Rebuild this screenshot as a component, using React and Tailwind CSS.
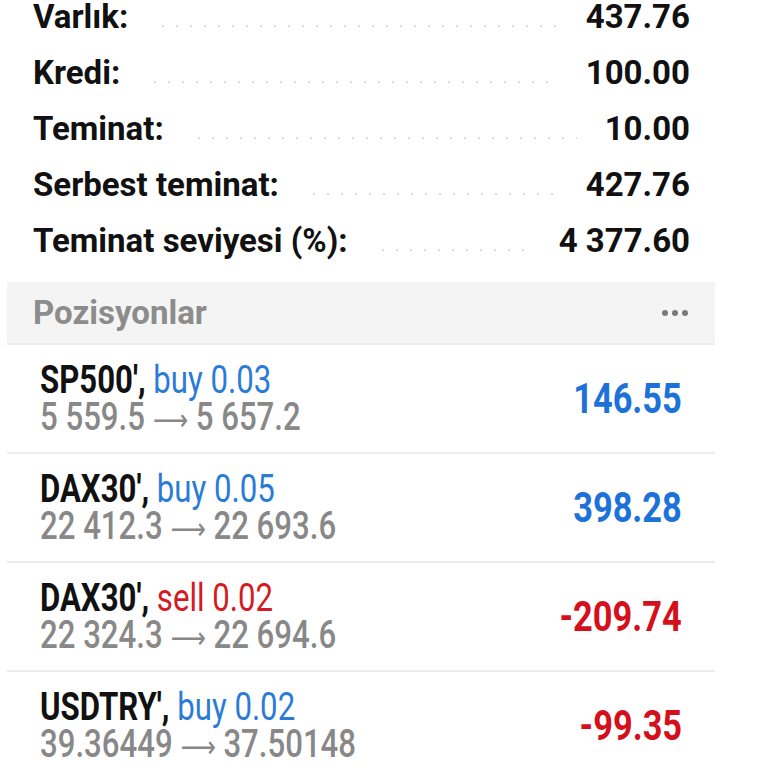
const summary = [
  { label: 'Varlık:', value: '437.76' },
  { label: 'Kredi:', value: '100.00' },
  { label: 'Teminat:', value: '10.00' },
  { label: 'Serbest teminat:', value: '427.76' },
  { label: 'Teminat seviyesi (%):', value: '4 377.60' },
]

const positions = [
  { symbol: "SP500'", side: 'buy', volume: '0.03', open: '5 559.5', current: '5 657.2', profit: '146.55' },
  { symbol: "DAX30'", side: 'buy', volume: '0.05', open: '22 412.3', current: '22 693.6', profit: '398.28' },
  { symbol: "DAX30'", side: 'sell', volume: '0.02', open: '22 324.3', current: '22 694.6', profit: '-209.74' },
  { symbol: "USDTRY'", side: 'buy', volume: '0.02', open: '39.36449', current: '37.50148', profit: '-99.35' },
]

function SummaryRow({ label, value }) {
  return (
    <div className="flex items-center h-[56px] pl-[26px] pr-[25px]">
      <span className="font-bold text-[33px] text-[#111] whitespace-nowrap">{label}</span>
      <div className="flex-1 mx-[28px] mt-[18px] h-[4px] bg-[radial-gradient(circle,#d9d9d9_1px,transparent_1.6px)] bg-[length:14px_4px] bg-repeat-x" />
      <span className="font-bold text-[33px] text-[#111] whitespace-nowrap">{value}</span>
    </div>
  )
}

function PositionRow({ p }) {
  const sell = p.side === 'sell'
  const loss = p.profit.startsWith('-')
  return (
    <div className="flex items-center justify-between h-[109px] border-b-2 border-[#ececec] pl-[33px] pr-[33px]">
      <div className="flex flex-col origin-left scale-x-[0.82] leading-[37px] mt-[2px]">
        <div className="text-[38px] whitespace-nowrap">
          <span className="font-bold text-[#111]">{p.symbol}, </span>
          <span className={sell ? 'text-[#d41a22]' : 'text-[#2a7bd8]'}>
            {p.side} {p.volume}
          </span>
        </div>
        <div className="text-[38px] font-medium text-[#888] whitespace-nowrap">
          {p.open} <span className="font-['DejaVu_Sans',sans-serif] font-normal text-[30px]">⟶</span> {p.current}
        </div>
      </div>
      <div
        className={
          'origin-right scale-x-[0.8] font-bold text-[43px] ' +
          (loss ? 'text-[#d3101c]' : 'text-[#1d72d9]')
        }
      >
        {p.profit}
      </div>
    </div>
  )
}

export default function App() {
  return (
    <div className="w-[768px] h-[768px] overflow-hidden bg-white font-['Roboto',sans-serif]">
      <div className="ml-[7px] w-[708px]">
        <div className="-mt-[11px] mb-[13px]">
          {summary.map((r) => (
            <SummaryRow key={r.label} {...r} />
          ))}
        </div>
        <div className="flex items-center justify-between h-[63px] bg-[#f4f4f4] pl-[26px] pr-[27px] border-b-2 border-[#ececec]">
          <span className="font-bold text-[33px] text-[#8c8c8c]">Pozisyonlar</span>
          <div className="flex gap-[4px]">
            <span className="w-[6px] h-[6px] rounded-full bg-[#7a7a7a]" />
            <span className="w-[6px] h-[6px] rounded-full bg-[#7a7a7a]" />
            <span className="w-[6px] h-[6px] rounded-full bg-[#7a7a7a]" />
          </div>
        </div>
        {positions.map((p, i) => (
          <PositionRow key={i} p={p} />
        ))}
      </div>
    </div>
  )
}
